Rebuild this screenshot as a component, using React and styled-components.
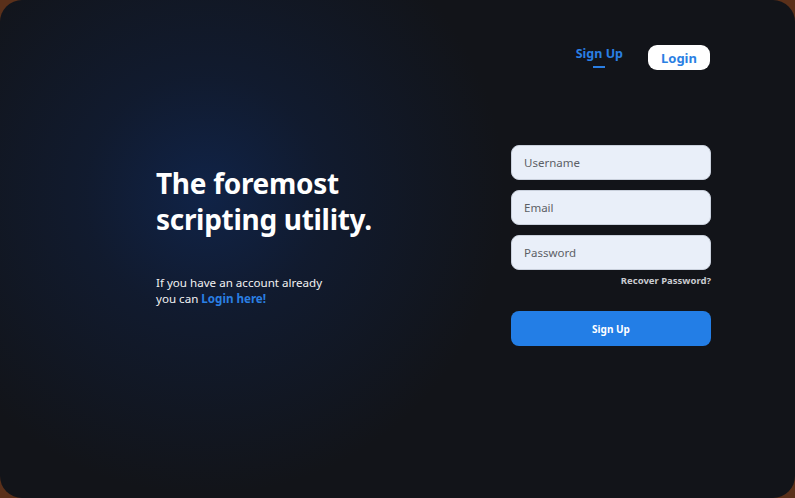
import React from 'react';
import styled, { createGlobalStyle } from 'styled-components';

const GlobalStyle = createGlobalStyle`
  html, body {
    margin: 0;
    padding: 0;
    background: #5a301a;
  }
  body {
    font-family: 'Noto Sans', 'Open Sans', sans-serif;
  }
  * { box-sizing: border-box; }
`;

const Window = styled.div`
  width: 795px;
  height: 498px;
  border-radius: 22px;
  overflow: hidden;
  background:
    radial-gradient(circle at 205px 195px, rgba(16, 36, 74, 0.95) 0px, rgba(16, 32, 64, 0.55) 120px, rgba(18, 22, 34, 0) 300px),
    #121419;
  display: flex;
  flex-direction: column;
`;

const Nav = styled.nav`
  display: flex;
  justify-content: flex-end;
  align-items: center;
  gap: 25px;
  padding: 45px 85px 0 0;
`;

const NavLink = styled.a`
  position: relative;
  color: #2a7fe3;
  font-size: 12.5px;
  font-weight: 700;
  text-decoration: none;
  margin-top: -9px;

  &::after {
    content: "";
    position: absolute;
    left: 50%;
    bottom: -6px;
    width: 12px;
    height: 2px;
    transform: translateX(-50%);
    background: #2a7fe3;
  }
`;

const NavButton = styled.button`
  width: 62px;
  height: 25px;
  border: none;
  border-radius: 9px;
  background: #ffffff;
  color: #2a7fe3;
  font-family: inherit;
  font-size: 13px;
  font-weight: 700;
  cursor: pointer;
`;

const Main = styled.main`
  display: flex;
  justify-content: space-between;
  align-items: flex-start;
  padding: 75px 84px 0 156px;
`;

const Intro = styled.section`
  padding-top: 20px;
  color: #fff;
`;

const Heading = styled.h1`
  margin: 0;
  font-size: 28px;
  line-height: 36px;
  font-weight: 700;
  letter-spacing: -0.3px;
`;

const Lead = styled.p`
  margin: 38px 0 0;
  font-size: 11.6px;
  line-height: 16px;
  color: #f2f2f2;
`;

const LeadLink = styled.a`
  color: #2a7fe3;
  font-weight: 700;
  text-decoration: none;
`;

const Form = styled.form`
  width: 200px;
  display: flex;
  flex-direction: column;
  gap: 10px;
`;

const Field = styled.input`
  width: 100%;
  height: 35px;
  padding: 0 12px;
  border: 1px solid #c9d0dc;
  border-radius: 8px;
  background: #e9eff9;
  font-family: inherit;
  font-size: 11.5px;
  color: #333;
  outline: none;

  &::placeholder {
    color: #5c5f66;
  }
`;

const Recover = styled.a`
  align-self: flex-end;
  margin-top: -6px;
  color: #c9cbd0;
  font-size: 9.5px;
  font-weight: 700;
  text-decoration: none;
`;

const Submit = styled.button`
  height: 35px;
  margin-top: 14px;
  border: none;
  border-radius: 8px;
  background: #237ee6;
  color: #fff;
  font-family: inherit;
  font-size: 10px;
  font-weight: 700;
  cursor: pointer;
`;

const App = () => {
  return (
    <>
      <GlobalStyle />
      <Window>
        <Nav>
          <NavLink href="#signup">Sign Up</NavLink>
          <NavButton type="button">Login</NavButton>
        </Nav>
        <Main>
          <Intro>
            <Heading>
              The foremost
              <br />
              scripting utility.
            </Heading>
            <Lead>
              If you have an account already
              <br />
              you can <LeadLink href="#login">Login here!</LeadLink>
            </Lead>
          </Intro>
          <Form onSubmit={e => e.preventDefault()}>
            <Field type="text" placeholder="Username" />
            <Field type="email" placeholder="Email" />
            <Field type="password" placeholder="Password" />
            <Recover href="#recover">Recover Password?</Recover>
            <Submit type="submit">Sign Up</Submit>
          </Form>
        </Main>
      </Window>
    </>
  );
};

export default App;
